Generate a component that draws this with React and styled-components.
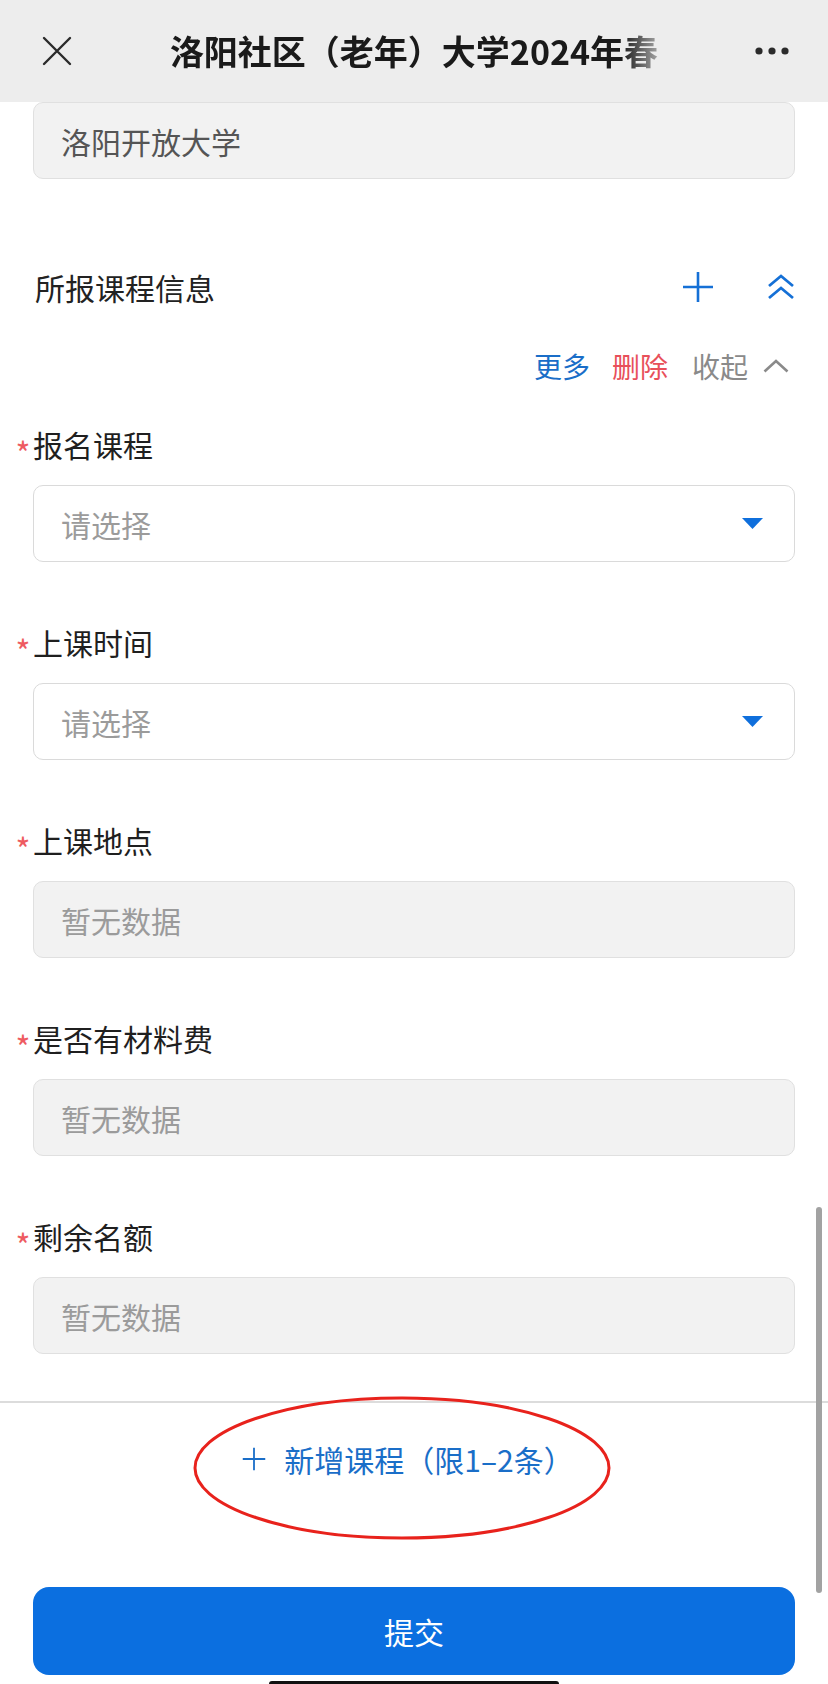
import React from 'react';
import styled, { createGlobalStyle } from 'styled-components';

const GlobalStyle = createGlobalStyle`
	html, body {
		margin: 0;
		padding: 0;
		background: #fff;
	}
	body {
		font-family: "Noto Sans CJK SC", "Noto Sans", sans-serif;
	}
`;

const PageStyles = styled.div`
	position: relative;
	width: 828px;
	height: 1684px;
	overflow: hidden;
	display: flex;
	flex-direction: column;
	background: #fff;
`;

const HeaderStyles = styled.header`
	height: 102px;
	flex-shrink: 0;
	background: #ededed;
	display: grid;
	grid-template-columns: 1fr auto 1fr;
	align-items: center;
	.left {
		padding-left: 42px;
		display: flex;
	}
	.right {
		padding-right: 39px;
		display: flex;
		justify-content: flex-end;
	}
`;

const Title = styled.h1`
	margin: 0;
	font-size: 34px;
	font-weight: 600;
	color: #1a1a1a;
	line-height: 44px;
	white-space: nowrap;
	-webkit-mask-image: linear-gradient(to right, #000 calc(100% - 36px), rgba(0, 0, 0, 0.35));
	mask-image: linear-gradient(to right, #000 calc(100% - 36px), rgba(0, 0, 0, 0.35));
`;

const ContentStyles = styled.div`
	padding: 0 33px 47px;
	display: flex;
	flex-direction: column;
`;

const Box = styled.div`
	box-sizing: border-box;
	height: 77px;
	border: 1.5px solid ${p => (p.disabled ? '#e0e0e0' : '#dadada')};
	border-radius: 10px;
	background: ${p => (p.disabled ? '#f2f2f2' : '#fff')};
	display: flex;
	align-items: center;
	justify-content: space-between;
	padding: 0 31px 0 27px;
	font-size: 30px;
	color: ${p => (p.dark ? '#555' : '#9b9b9b')};
`;

const SectionHeader = styled.div`
	margin-top: 88px;
	display: flex;
	align-items: center;
	justify-content: space-between;
	height: 40px;
	padding-left: 2px;
	font-size: 30px;
	color: #222;
	.icons {
		display: flex;
		align-items: center;
		gap: 53px;
	}
`;

const ActionsRow = styled.div`
	margin-top: 39px;
	height: 40px;
	display: flex;
	align-items: center;
	justify-content: flex-end;
	padding-right: 6px;
	font-size: 28px;
`;

const Action = styled.span`
	color: ${p => p.color};
	margin-right: ${p => p.gap}px;
`;

const FieldList = styled.div`
	margin-top: 38px;
	display: flex;
	flex-direction: column;
	gap: 60px;
`;

const FieldStyles = styled.div`
	display: flex;
	flex-direction: column;
	gap: 21px;
`;

const Label = styled.div`
	height: 40px;
	display: flex;
	align-items: center;
	margin-left: -20px;
	font-size: 30px;
	color: #1f1f1f;
	.star {
		width: 20px;
		padding-top: 16px;
		font-size: 32px;
		color: #ee5b61;
		line-height: 1;
		text-align: center;
	}
`;

const Divider = styled.div`
	height: 1.5px;
	background: #dcdcdc;
`;

const AddRow = styled.div`
	position: relative;
	padding-top: 36px;
	height: 40px;
	display: flex;
	justify-content: center;
	align-items: center;
	gap: 18px;
	font-size: 30px;
	color: #1a6ec8;
	padding-right: 12px;
`;

const Ellipse = styled.svg`
	position: absolute;
	left: 192px;
	top: -8px;
`;

const SubmitButton = styled.button`
	margin: 108px 33px 0;
	height: 88px;
	border: none;
	border-radius: 16px;
	background: #0b6fe0;
	color: #fff;
	font-family: inherit;
	font-size: 30px;
`;

const ScrollIndicator = styled.div`
	position: absolute;
	right: 6px;
	top: 1207px;
	width: 6px;
	height: 386px;
	border-radius: 3px;
	background: #a2a2a2;
`;

const HomeIndicator = styled.div`
	position: absolute;
	left: 269px;
	bottom: -3px;
	width: 290px;
	height: 6px;
	border-radius: 3px;
	background: #111;
`;

const blue = '#1570d6';

function CloseIcon() {
	return (
		<svg width="30" height="30" viewBox="0 0 30 30">
			<path d="M2 2 L28 28 M28 2 L2 28" stroke="#2b2b2b" strokeWidth="2.4" strokeLinecap="round" />
		</svg>
	);
}

function MoreIcon() {
	return (
		<svg width="34" height="8" viewBox="0 0 34 8">
			<circle cx="4" cy="4" r="3.6" fill="#2b2b2b" />
			<circle cx="17" cy="4" r="3.6" fill="#2b2b2b" />
			<circle cx="30" cy="4" r="3.6" fill="#2b2b2b" />
		</svg>
	);
}

function PlusIcon({ size = 32, color = blue, width = 2.6 }) {
	return (
		<svg width={size} height={size} viewBox="0 0 32 32">
			<path d="M16 1 V31 M1 16 H31" stroke={color} strokeWidth={width} />
		</svg>
	);
}

function DoubleUpIcon() {
	return (
		<svg width="28" height="26" viewBox="0 0 28 26">
			<polyline points="2,12 14,2 26,12" fill="none" stroke={blue} strokeWidth="2.8" />
			<polyline points="2,24 14,14 26,24" fill="none" stroke={blue} strokeWidth="2.8" />
		</svg>
	);
}

function UpIcon() {
	return (
		<svg width="26" height="14" viewBox="0 0 26 14">
			<polyline points="1.5,12.5 13,2 24.5,12.5" fill="none" stroke="#8a8a8a" strokeWidth="2.6" />
		</svg>
	);
}

function DropTriangle() {
	return (
		<svg width="21" height="11" viewBox="0 0 21 11">
			<polygon points="0,0 21,0 10.5,11" fill="#0f6fdc" />
		</svg>
	);
}

const fields = [
	{ id: 'course', label: '报名课程', value: '请选择', select: true },
	{ id: 'time', label: '上课时间', value: '请选择', select: true },
	{ id: 'place', label: '上课地点', value: '暂无数据' },
	{ id: 'fee', label: '是否有材料费', value: '暂无数据' },
	{ id: 'quota', label: '剩余名额', value: '暂无数据' },
];

function Field({ field }) {
	return (
		<FieldStyles>
			<Label>
				<span className="star">*</span>
				<span>{field.label}</span>
			</Label>
			<Box disabled={!field.select}>
				<span>{field.value}</span>
				{field.select && <DropTriangle />}
			</Box>
		</FieldStyles>
	);
}

export default function App() {
	return (
		<>
			<GlobalStyle />
			<PageStyles>
				<HeaderStyles>
					<div className="left">
						<CloseIcon />
					</div>
					<Title>洛阳社区（老年）大学2024年春</Title>
					<div className="right">
						<MoreIcon />
					</div>
				</HeaderStyles>
				<ContentStyles>
					<Box disabled dark>
						<span>洛阳开放大学</span>
					</Box>
					<SectionHeader>
						<span>所报课程信息</span>
						<div className="icons">
							<PlusIcon />
							<DoubleUpIcon />
						</div>
					</SectionHeader>
					<ActionsRow>
						<Action color="#1a6ec8" gap={22}>更多</Action>
						<Action color="#e8505a" gap={24}>删除</Action>
						<Action color="#8a8a8a" gap={15}>收起</Action>
						<UpIcon />
					</ActionsRow>
					<FieldList>
						{fields.map(field => (
							<Field key={field.id} field={field} />
						))}
					</FieldList>
				</ContentStyles>
				<Divider />
				<AddRow>
					<PlusIcon size={24} color="#1a6ec8" width={2.4} />
					<span>新增课程（限1–2条）</span>
					<Ellipse width="420" height="146" viewBox="0 0 420 146">
						<ellipse cx="210" cy="73" rx="207" ry="70" fill="none" stroke="#e8221c" strokeWidth="3" />
					</Ellipse>
				</AddRow>
				<SubmitButton>提交</SubmitButton>
				<ScrollIndicator />
				<HomeIndicator />
			</PageStyles>
		</>
	);
}
